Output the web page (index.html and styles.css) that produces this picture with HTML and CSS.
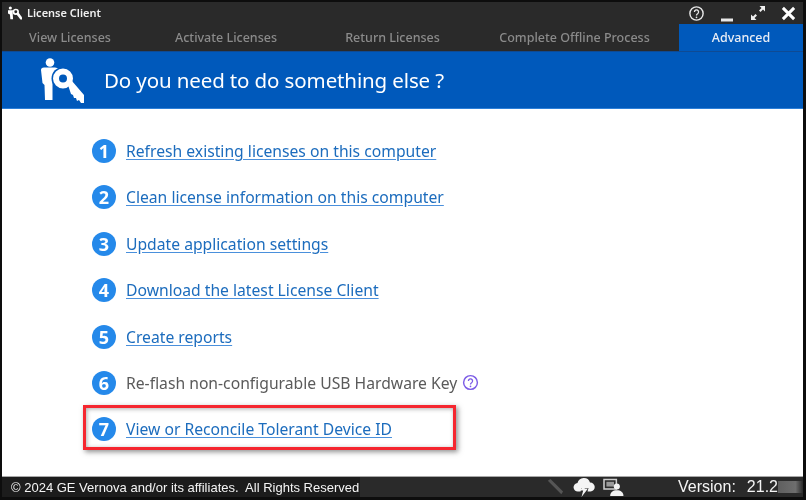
FILE: index.html
```html
<!DOCTYPE html>
<html lang="en">
<head>
<meta charset="utf-8">
<title>License Client</title>
<link rel="stylesheet" href="styles.css">
</head>
<body>
<div class="window">
  <header class="titlebar">
    <svg class="app-icon" viewBox="0 0 20 18" width="16" height="14"><circle cx="4" cy="2.500" r="2" fill="#fff"/><path d="M1 5.500h6.500L7 8.500 7.500 17H4L3.500 11 1 9.500z" fill="#fff"/><circle cx="11" cy="7.500" r="3" fill="none" stroke="#fff" stroke-width="2.200"/><path d="M12.500 10L14.500 8.500 19 14.500V17.500H17L12 11z" fill="#fff"/></svg>
    <span class="app-name">License Client</span>
    <div class="win-controls">
      <svg viewBox="0 0 18 18" width="17" height="17"><circle cx="9" cy="9" r="7" fill="none" stroke="#e8e8e8" stroke-width="1.500"/><path d="M6.800 7.300a2.200 2.200 0 1 1 3.400 1.900c-.8.500-1.200.9-1.200 1.800" fill="none" stroke="#e8e8e8" stroke-width="1.400"/><circle cx="9" cy="13" r=".9" fill="#e8e8e8"/></svg>
      <svg viewBox="0 0 14 18" width="14" height="18"><rect x="1" y="14.500" width="12" height="3" fill="#e8e8e8"/></svg>
      <svg viewBox="0 0 16 16" width="16" height="16"><path d="M9.500 1H15V6.500L13 4.500 10.500 7 9 5.500 11.500 3zM6.500 15H1V9.500L3 11.500 5.500 9 7 10.500 4.500 13z" fill="#f0f0f0"/></svg>
      <svg viewBox="0 0 16 16" width="15" height="15"><path d="M2 2L14 14M14 2L2 14" stroke="#fff" stroke-width="3.200"/></svg>
    </div>
  </header>
  <nav class="tabs">
    <a class="tab t1">View Licenses</a>
    <a class="tab t2">Activate Licenses</a>
    <a class="tab t3">Return Licenses</a>
    <a class="tab t4">Complete Offline Process</a>
    <a class="tab t5 active">Advanced</a>
  </nav>
  <section class="banner">
    <svg class="banner-icon" viewBox="0 0 46 47" width="46" height="47"><circle cx="10" cy="5.500" r="4.300" fill="#fff"/><path d="M1 13Q1 10.500 4 10.500H15L19 11.500Q14 14 12.500 20V43H5L4.500 28 2.500 26z" fill="#fff"/><circle cx="23" cy="21.500" r="11.500" fill="#0059bb"/><circle cx="23" cy="21.500" r="7" fill="none" stroke="#fff" stroke-width="6"/><path d="M28 28L32 24 44 38V46H41L39 43 37 44 36 41 34 41 33 38 31 37z" fill="#fff"/></svg>
    <h1 class="banner-title">Do you need to do something else ?</h1>
  </section>
  <main class="content">
    <ol class="tasks">
      <li class="task"><span class="num">1</span><a class="link">Refresh existing licenses on this computer</a></li>
      <li class="task"><span class="num">2</span><a class="link">Clean license information on this computer</a></li>
      <li class="task"><span class="num">3</span><a class="link">Update application settings</a></li>
      <li class="task"><span class="num">4</span><a class="link">Download the latest License Client</a></li>
      <li class="task"><span class="num">5</span><a class="link">Create reports</a></li>
      <li class="task"><span class="num">6</span><span class="plain">Re-flash non-configurable USB Hardware Key</span>
        <svg class="help" viewBox="0 0 18 18" width="17" height="17"><circle cx="9" cy="9" r="7.300" fill="none" stroke="#7c5ce6" stroke-width="1.500"/><path d="M6.800 7.300a2.200 2.200 0 1 1 3.400 1.900c-.8.500-1.200.9-1.200 1.800" fill="none" stroke="#7c5ce6" stroke-width="1.400"/><circle cx="9" cy="13" r=".9" fill="#7c5ce6"/></svg>
      </li>
      <li class="task highlighted"><span class="num">7</span><a class="link">View or Reconcile Tolerant Device ID</a></li>
    </ol>
  </main>
  <footer class="statusbar">
    <span class="copyright">© 2024 GE Vernova and/or its affiliates.&nbsp; All Rights Reserved</span>
    <div class="status-icons">
      <svg viewBox="0 0 20 20" width="20" height="18"><path d="M2 3L5 1 19 15 17 18z" fill="#555"/></svg>
      <svg viewBox="0 0 22 20" width="22" height="20"><path d="M5 14.500a4.200 4.200 0 0 1-.5-8.400A6.500 6.500 0 0 1 17 5.500a4.500 4.500 0 0 1 .5 9h-3l1-3.500H8.500l-1 3.500z" fill="#f4f4f4"/><path d="M12 6.500L7 13.500h3.200L8.500 20l6.500-8.500h-3.300z" fill="#f4f4f4"/></svg>
      <svg viewBox="0 0 22 20" width="21" height="19"><path d="M1 1.500h13v10H1z" fill="none" stroke="#cfcfcf" stroke-width="1.600"/><path d="M3.500 4h8v5h-8z" fill="#9a9a9a"/><circle cx="14.500" cy="9" r="3.200" fill="#f2f2f2"/><path d="M7.500 19c0-4 3-6 7-6s7 2 7 6z" fill="#f2f2f2"/></svg>
    </div>
    <div class="version"><span>Version:</span><span class="version-no">21.2</span><span class="redact"></span></div>
  </footer>
</div>
</body>
</html>
```
FILE: styles.css
```css
*, *::after { box-sizing: border-box; }
html, body { margin: 0; padding: 0; }
body { width: 806px; height: 500px; background: #fff; overflow: hidden; font-family: "Noto Sans", sans-serif; }
.window { width: 806px; height: 500px; display: flex; flex-direction: column; border: solid #0d0d0d; border-width: 2px 3px 3px 2px; background: #2a2a2a; filter: blur(.35px); }

.titlebar { height: 22px; flex: none; display: flex; align-items: center; padding: 0 7px 0 5px; color: #f2f2f2; }
.app-icon { flex: none; }
.app-name { margin-left: 4px; margin-top: -2px; font-size: 11px; font-weight: 600; color: #efefef; }
.win-controls { margin-left: auto; display: flex; align-items: center; gap: 15.500px; }

.tabs { height: 27px; flex: none; display: grid; grid-template-columns: 148px 162px 172px 195px 124px; align-items: stretch; }
.tab { display: flex; align-items: center; justify-content: center; font-size: 12.500px; font-weight: 500; color: #8b8b8b; }
.t1 { padding-right: 12px; }
.t2 { padding-right: 10px; }
.t3 { padding-right: 11px; }
.t4 { padding-right: 14px; }
.tab.active { background: #0059bb; color: #e8edf5; }

.banner { height: 58px; flex: none; display: flex; align-items: center; background: #0059bb; border-top: 1px solid #0f4a93; border-bottom: 1px solid #2c7fd8; padding-left: 38px; }
.banner-icon { flex: none; }
.banner-title { margin: 0 0 0 18px; font-size: 20.500px; letter-spacing: -.12px; font-weight: 400; color: #fff; white-space: nowrap; }

.content { flex: 1; background: #fff; min-height: 0; }
.tasks { list-style: none; margin: 0; padding: 30px 0 0 90px; display: flex; flex-direction: column; gap: 22.400px; }
.task { height: 24px; display: flex; align-items: center; position: relative; font-size: 15.700px; white-space: nowrap; }
.num { flex: none; width: 24px; height: 24px; margin-right: 10px; border-radius: 50%; background: #2589ea; color: #fff; display: flex; align-items: center; justify-content: center; font-size: 18px; font-weight: 700; line-height: 1; }
.link { color: #1c6cbd; text-decoration: underline; text-decoration-color: #4a90dc; text-underline-offset: 2px; }
.plain { color: #5a5a5a; }
.help { margin-left: 5px; flex: none; }
.highlighted::after { content: ""; position: absolute; left: -9px; top: -12px; width: 373px; height: 45px; border: 3.500px solid #f5262f; box-shadow: 2px 2px 5px rgba(70,70,70,.6), inset 1px 1px 4px rgba(70,70,70,.45); }

.statusbar { height: 21px; flex: none; display: flex; align-items: center; border-top: 1px solid #a8a8a8; background: #2a2a2a; color: #f4f4f4; font-family: "Liberation Sans", sans-serif; position: relative; }
.copyright { font-size: 13px; background: #1c1c1c; height: 100%; display: flex; align-items: center; padding: 0 1px 0 9px; white-space: nowrap; }
.status-icons { margin-left: 185px; display: flex; align-items: center; gap: 8px; }
.version { margin-left: auto; display: flex; align-items: center; font-size: 16px; height: 100%; }
.version-no { margin-left: 11px; }
.redact { width: 25px; height: 12px; background: linear-gradient(90deg, #5f5f5f, #6e6e6e 70%, #2a2a2a); }
```
